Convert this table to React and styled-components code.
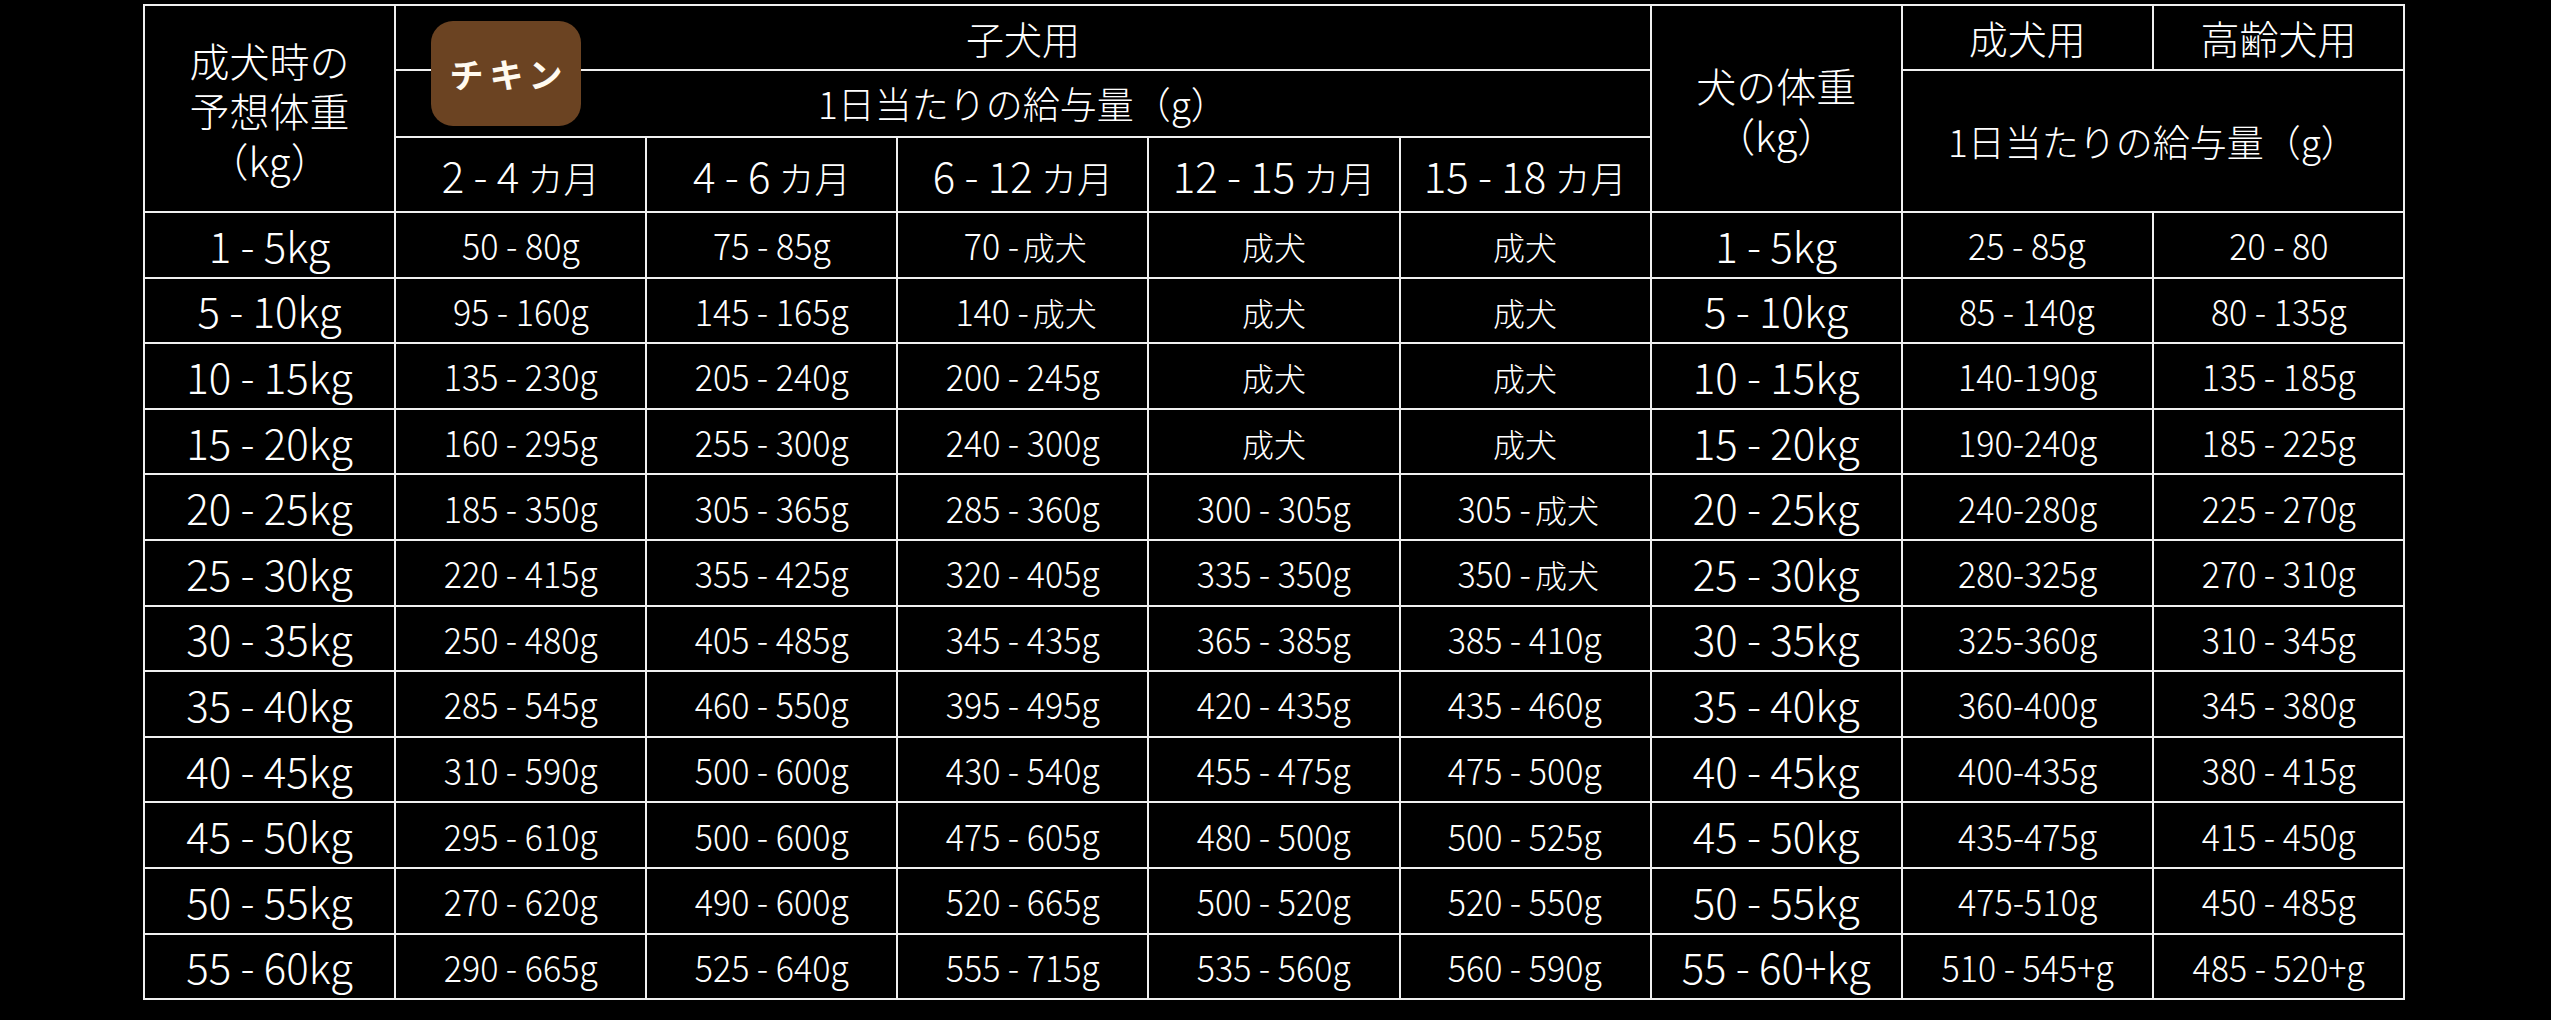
import React from "react";
import styled, { createGlobalStyle } from "styled-components";

const Global = createGlobalStyle`
  html, body { margin: 0; padding: 0; background: #000; }
  body { font-family: "Noto Sans CJK JP", sans-serif; color: #fff; }
`;

const Page = styled.div`
  width: 2551px;
  height: 1020px;
  background: #000;
  padding: 4px 0 0 143px;
  box-sizing: border-box;
`;

const Wrap = styled.div`
  position: relative;
  width: 2262px;
`;

const Table = styled.table`
  width: 2262px;
  border-collapse: collapse;
  table-layout: fixed;
  border: 2px solid #f0f0f0;
`;

const Cell = styled.td`
  border: 2px solid #f0f0f0;
  padding: 0;
  text-align: center;
  vertical-align: middle;
  color: #fff;
  font-family: "Noto Sans CJK JP", sans-serif;
  font-weight: 300;
  font-size: ${(p) => p.$size || 37}px;
  line-height: 1;
  height: ${(p) => (p.$h ? `${p.$h}px` : "auto")};
  white-space: nowrap;
`;

const Head = styled(Cell).attrs({ as: "th" })``;

const Num = styled.span`
  display: inline-block;
  font-size: ${(p) => p.$size || 37}px;
  transform: scaleX(${(p) => p.$sx || 0.92});
  transform-origin: ${(p) => (p.$tight ? "right center" : "center")};
  margin-right: ${(p) => (p.$tight ? "-0.12em" : "0")};
`;

const Jp = styled.span`
  font-family: "Noto Sans CJK JP", sans-serif;
  font-size: ${(p) => p.$size || 32}px;
`;

const Stack = styled.div`
  font-family: "Noto Sans CJK JP", sans-serif;
  font-size: ${(p) => p.$size || 40}px;
  line-height: 50px;
  padding-top: 2px;
`;

const Badge = styled.div`
  position: absolute;
  left: 288px;
  top: 17px;
  width: 150px;
  height: 105px;
  border-radius: 22px;
  background: #6b4322;
  display: flex;
  align-items: center;
  justify-content: center;
  color: #fffaf0;
  font-family: "Noto Sans CJK JP", sans-serif;
  font-weight: 700;
  font-size: 34px;
  letter-spacing: 6px;
  padding-left: 6px;
  box-sizing: border-box;
`;

const rows = [
  ["1 - 5kg", "50 - 80g", "75 - 85g", "70 - 成犬", "成犬", "成犬", "1 - 5kg", "25 - 85g", "20 - 80"],
  ["5 - 10kg", "95 - 160g", "145 - 165g", "140 - 成犬", "成犬", "成犬", "5 - 10kg", "85 - 140g", "80 - 135g"],
  ["10 - 15kg", "135 - 230g", "205 - 240g", "200 - 245g", "成犬", "成犬", "10 - 15kg", "140-190g", "135 - 185g"],
  ["15 - 20kg", "160 - 295g", "255 - 300g", "240 - 300g", "成犬", "成犬", "15 - 20kg", "190-240g", "185 - 225g"],
  ["20 - 25kg", "185 - 350g", "305 - 365g", "285 - 360g", "300 - 305g", "305 - 成犬", "20 - 25kg", "240-280g", "225 - 270g"],
  ["25 - 30kg", "220 - 415g", "355 - 425g", "320 - 405g", "335 - 350g", "350 - 成犬", "25 - 30kg", "280-325g", "270 - 310g"],
  ["30 - 35kg", "250 - 480g", "405 - 485g", "345 - 435g", "365 - 385g", "385 - 410g", "30 - 35kg", "325-360g", "310 - 345g"],
  ["35 - 40kg", "285 - 545g", "460 - 550g", "395 - 495g", "420 - 435g", "435 - 460g", "35 - 40kg", "360-400g", "345 - 380g"],
  ["40 - 45kg", "310 - 590g", "500 - 600g", "430 - 540g", "455 - 475g", "475 - 500g", "40 - 45kg", "400-435g", "380 - 415g"],
  ["45 - 50kg", "295 - 610g", "500 - 600g", "475 - 605g", "480 - 500g", "500 - 525g", "45 - 50kg", "435-475g", "415 - 450g"],
  ["50 - 55kg", "270 - 620g", "490 - 600g", "520 - 665g", "500 - 520g", "520 - 550g", "50 - 55kg", "475-510g", "450 - 485g"],
  ["55 - 60kg", "290 - 665g", "525 - 640g", "555 - 715g", "535 - 560g", "560 - 590g", "55 - 60+kg", "510 - 545+g", "485 - 520+g"],
];

function renderValue(v, big) {
  if (v === "成犬") return <Jp>成犬</Jp>;
  if (v.includes("成犬")) {
    const pre = v.replace(" 成犬", "");
    return (
      <>
        <Num $tight>{pre}</Num> <Jp>成犬</Jp>
      </>
    );
  }
  return big ? (
    <Num $size={42} $sx={1}>{v}</Num>
  ) : (
    <Num>{v}</Num>
  );
}

const months = ["2 - 4", "4 - 6", "6 - 12", "12 - 15", "15 - 18"];

export default function App() {
  return (
    <Page>
      <Global />
      <Wrap>
        <Table>
          <colgroup>
            {Array.from({ length: 9 }).map((_, i) => (
              <col key={i} style={{ width: "251px" }} />
            ))}
          </colgroup>
          <thead>
            <tr>
              <Head rowSpan={3}>
                <Stack>成犬時の<br />予想体重<br />（kg）</Stack>
              </Head>
              <Head colSpan={5} $h={63}>
                <Jp $size={38}>子犬用</Jp>
              </Head>
              <Head rowSpan={3}>
                <Stack>犬の体重<br />（kg）</Stack>
              </Head>
              <Head $h={63}>
                <Jp $size={39}>成犬用</Jp>
              </Head>
              <Head>
                <Jp $size={39}>高齢犬用</Jp>
              </Head>
            </tr>
            <tr>
              <Head colSpan={5} $h={65}>
                <Jp $size={37}>1日当たりの給与量（g）</Jp>
              </Head>
              <Head colSpan={2} rowSpan={2}>
                <Jp $size={37}>1日当たりの給与量（g）</Jp>
              </Head>
            </tr>
            <tr>
              {months.map((m) => (
                <Head key={m} $h={73}>
                  <Num $size={42} $sx={1}>{m}</Num> <Jp $size={36}>カ月</Jp>
                </Head>
              ))}
            </tr>
          </thead>
          <tbody>
            {rows.map((r, ri) => (
              <tr key={ri}>
                {r.map((v, ci) => (
                  <Cell key={ci} $h={63.6}>
                    {renderValue(v, ci === 0 || ci === 6)}
                  </Cell>
                ))}
              </tr>
            ))}
          </tbody>
        </Table>
        <Badge>チキン</Badge>
      </Wrap>
    </Page>
  );
}
